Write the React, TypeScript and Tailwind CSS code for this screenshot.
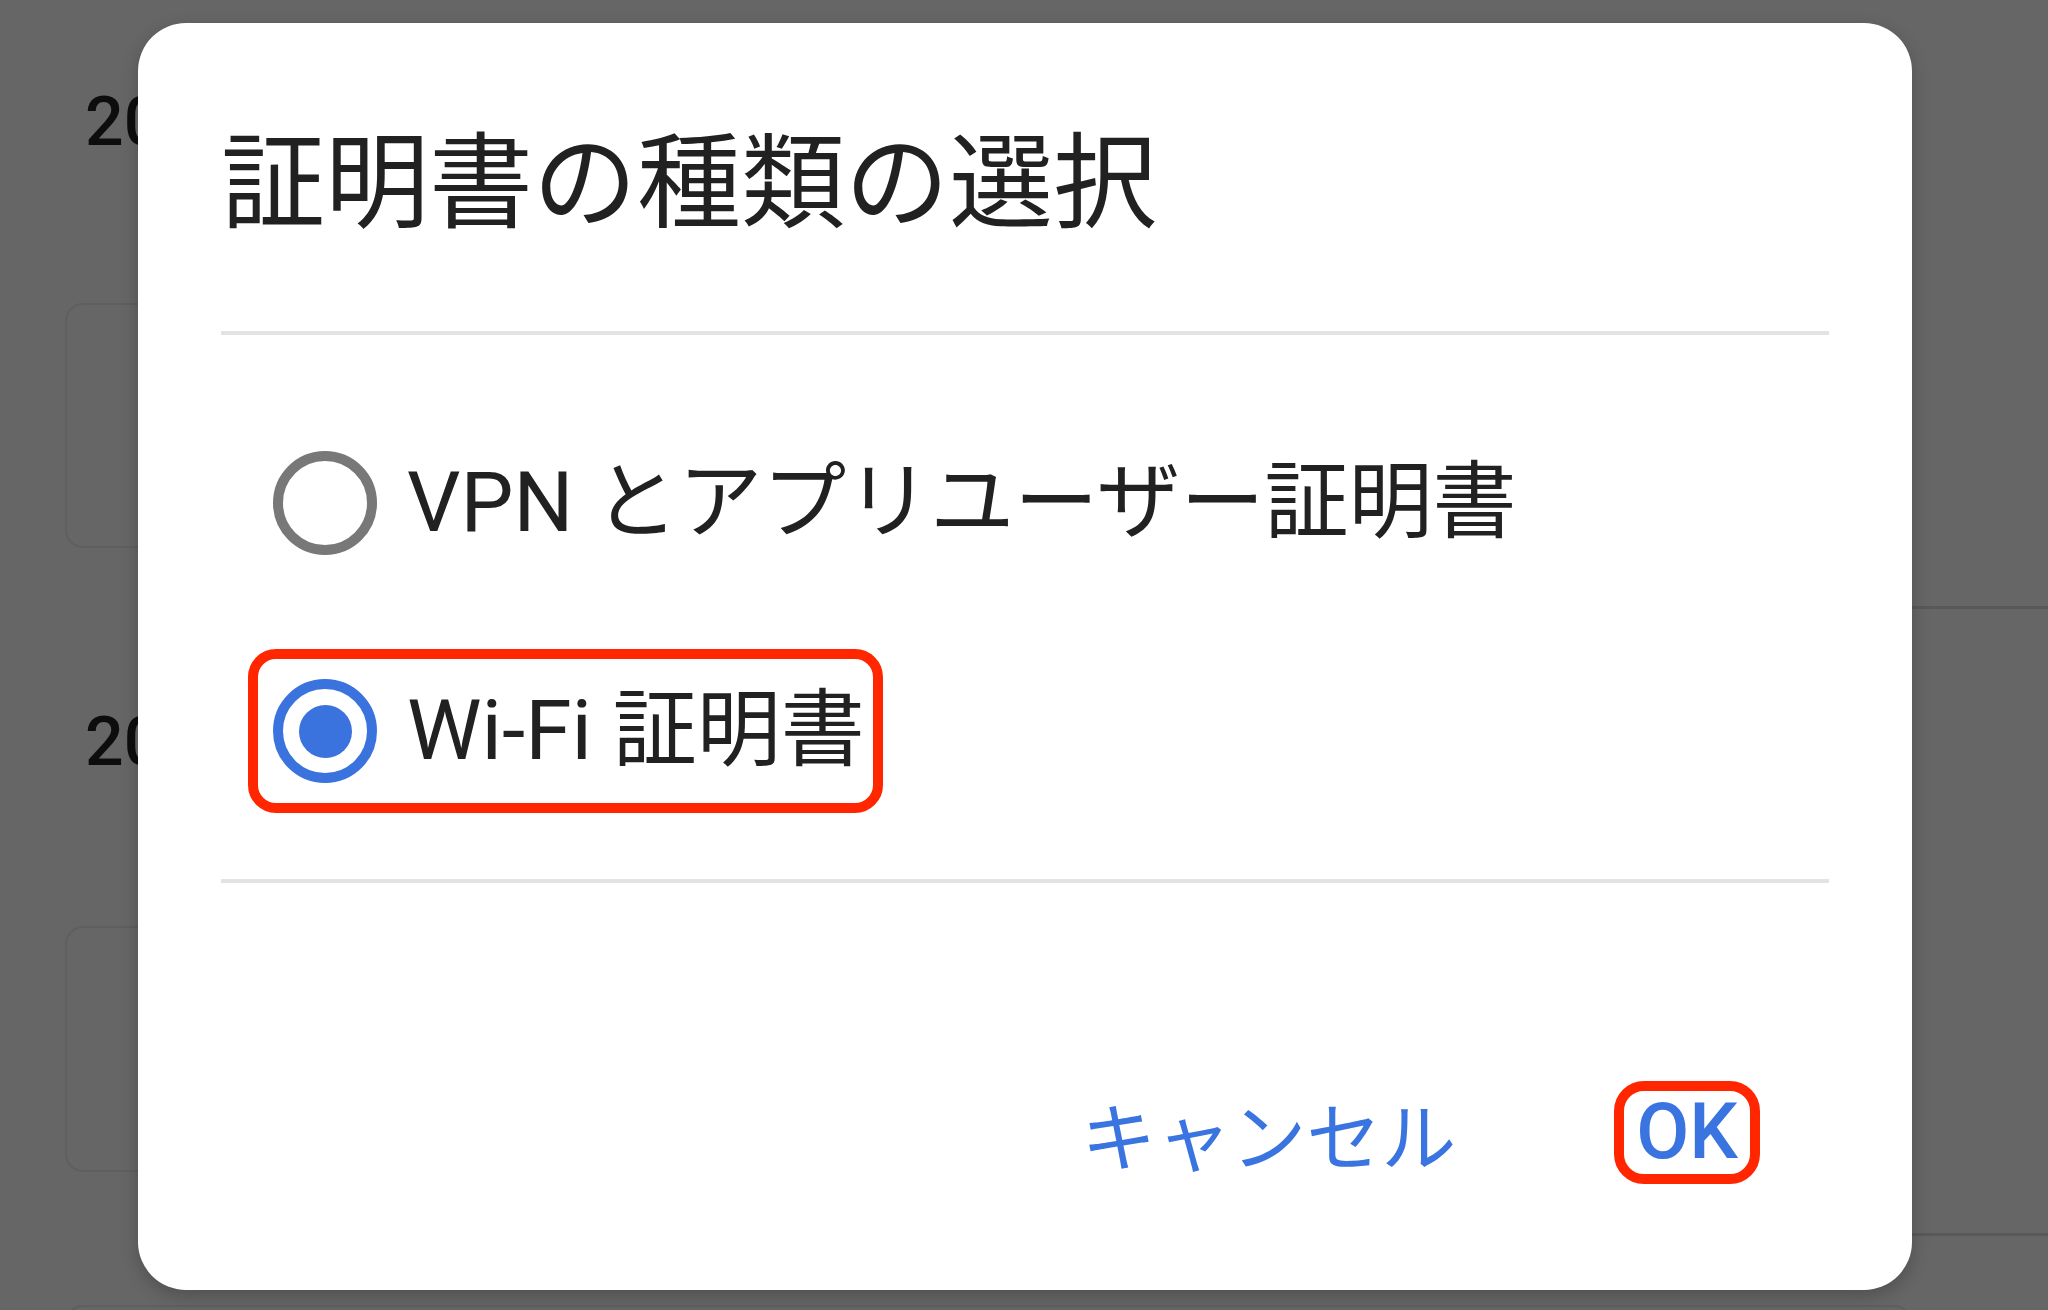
import { useState } from "react";

/** Options shown in the certificate type dialog. */
const OPTIONS = [
  { id: "vpn", label: "VPN とアプリユーザー証明書" },
  { id: "wifi", label: "Wi-Fi 証明書" },
];

const FONT = "font-['Roboto','Noto_Sans_CJK_JP',sans-serif]";

/** Radio circle, Android style. */
function Radio({ checked }: { checked: boolean }) {
  return (
    <span
      className={
        "flex items-center justify-center w-[104px] h-[104px] shrink-0 rounded-full border-[10px] " +
        (checked ? "border-[#3a73de]" : "border-[#787878]")
      }
    >
      {checked && <span className="block w-[53px] h-[53px] rounded-full bg-[#3a73de]" />}
    </span>
  );
}

/** Dimmed page behind the modal; the dialog covers most of it. */
function BackgroundPage() {
  return (
    <div className="flex w-full h-full">
      <div className="flex flex-col flex-1 pl-[65px]">
        <div className="shrink-0 pt-[88px] pl-[20px] text-[68px] leading-none font-medium text-[#0d0d0d] whitespace-nowrap">
          2023年10月
        </div>
        <div className="shrink-0 mt-[147px] h-[245px] rounded-[18px] border-2 border-[#5f5f5f]" />
        <div className="shrink-0 mt-[160px] pl-[20px] text-[68px] leading-none font-medium text-[#0d0d0d] whitespace-nowrap">
          2023年9月
        </div>
        <div className="shrink-0 mt-[150px] h-[246px] rounded-[18px] border-2 border-[#5f5f5f]" />
        <div className="shrink-0 mt-[133px] h-[200px] rounded-[18px] border-2 border-[#5f5f5f]" />
      </div>
      <div className="flex flex-col w-[136px]">
        <div className="shrink-0 mt-[606px] h-[3px] bg-[#595959]" />
        <div className="shrink-0 mt-[624px] h-[3px] bg-[#595959]" />
      </div>
    </div>
  );
}

export default function App() {
  const [selected, setSelected] = useState("wifi");

  return (
    <div className={`relative w-[2048px] h-[1310px] overflow-hidden bg-[#666666] ${FONT}`}>
      <BackgroundPage />

      {/* ---- Modal dialog ---- */}
      <div className="absolute left-[138px] top-[23px] w-[1774px] h-[1267px] bg-white rounded-[48px] shadow-[0_6px_18px_rgba(0,0,0,0.22)] flex flex-col px-[83px]">
        <h1 className="pt-[100px] text-[104px] leading-none font-normal text-[#212121] font-['Noto_Sans_CJK_JP',sans-serif]">
          証明書の種類の選択
        </h1>

        <div className="mt-[104px] h-[4px] bg-[#e3e3e3]" />

        <div className="flex flex-col items-start gap-[64px] mt-[86px] ml-[27px]">
          {OPTIONS.map((opt) => {
            const checked = opt.id === selected;
            return (
              <button
                key={opt.id}
                onClick={() => setSelected(opt.id)}
                className={
                  "flex items-center gap-[30px] h-[164px] pl-[15px] pr-[8px] border-[10px] rounded-[28px] " +
                  (checked ? "border-[#ff2600]" : "border-transparent")
                }
              >
                <Radio checked={checked} />
                <span className="text-[84px] leading-none text-[#212121] whitespace-nowrap">
                  {opt.label}
                </span>
              </button>
            );
          })}
        </div>

        <div className="mt-[66px] h-[4px] bg-[#e3e3e3]" />

        <div className="flex items-center justify-end mt-[198px] pr-[69px] gap-[158px]">
          <button className="text-[75px] leading-none font-normal text-[#3a74e0] font-['Noto_Sans_CJK_JP',sans-serif]">
            キャンセル
          </button>
          <button className="flex items-center justify-center h-[103px] px-[12px] border-[10px] border-[#ff2600] rounded-[30px] text-[77px] leading-none font-medium text-[#3a74e0]">
            OK
          </button>
        </div>
      </div>
    </div>
  );
}
